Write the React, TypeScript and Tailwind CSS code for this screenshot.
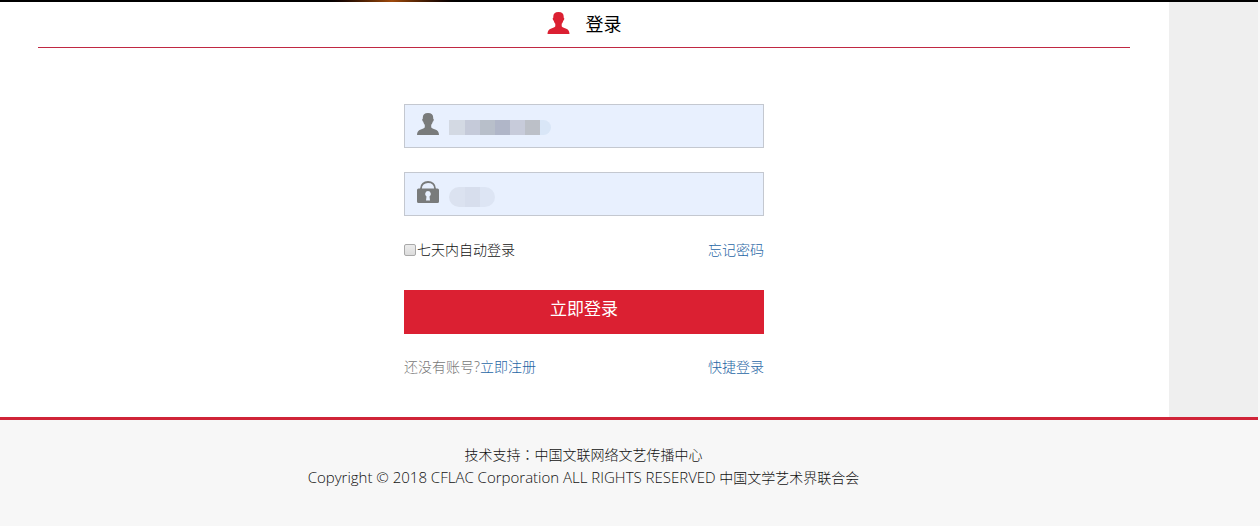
import React, { useState } from "react";

const UserIcon = ({ className }: { className: string }) => (
  <svg viewBox="0 0 22 22" className={className} fill="currentColor" aria-hidden="true">
    <path d="M11 0C7.500 0 5.700 1.900 5.800 4.800v1c-.6.1-.7.7-.5 1.500.2.8.5 1.300 1 1.400.3 1.400.8 2.300 1.500 3v2.600c-.5.900-2.200 1.500-4 2.200C1.200 17.500.1 18.800 0 22h22c-.1-3.200-1.200-4.500-3.800-5.500-1.800-.7-3.500-1.300-4-2.200v-2.600c.7-.7 1.200-1.600 1.500-3 .5-.1.8-.6 1-1.400.2-.8.1-1.400-.5-1.500v-1C16.300 1.900 14.500 0 11 0z" />
  </svg>
);

const LockIcon = ({ className }: { className: string }) => (
  <svg viewBox="0 0 22 22" className={className} aria-hidden="true">
    <path d="M4 8V7.500C4 3.500 7 1 11 1s7 2.500 7 6.500V8" fill="none" stroke="currentColor" strokeWidth="1.800" />
    <path
      fill="currentColor"
      fillRule="evenodd"
      d="M1.500 7.500h19A1.500 1.500 0 0 1 22 9v11.500a1.500 1.500 0 0 1-1.500 1.500h-19A1.500 1.500 0 0 1 0 20.500V9a1.500 1.500 0 0 1 1.500-1.500zM11 10a3 3 0 0 0-1.500 5.500L9 19.500h4l-.5-4A3 3 0 0 0 11 10z"
    />
  </svg>
);

const App = () => {
  const [account, setAccount] = useState("");
  const [password, setPassword] = useState("");
  const [remember, setRemember] = useState(false);

  return (
    <div className="min-h-screen flex flex-col bg-[#f7f7f7] pr-0.5 text-sm font-light text-[#111] font-['Noto_Sans','Noto_Sans_CJK_SC',sans-serif]">
      <div className="h-0.5 bg-black flex">
        <div className="ml-[320px] w-36 bg-linear-to-r from-black via-[#a04a0c] to-black" />
      </div>

      <div className="flex bg-[#efefef]">
        <main className="flex-1 bg-white pr-px pb-10">
          <h1 className="mx-[38px] h-[46px] pb-0.5 flex items-center justify-center gap-4 border-b border-b-[#c02842] text-lg font-normal text-black">
            <UserIcon className="w-[23px] h-[22px] mb-0.5 text-[#db2032]" />
            登录
          </h1>

          <form
            className="w-[360px] mx-auto mt-14 flex flex-col"
            onSubmit={(e) => e.preventDefault()}
          >
            <label className="relative h-11 flex items-center pl-3 border border-[#c4c8d0] bg-[#e8f0fe]">
              <UserIcon className="w-[22px] h-[22px] mb-1 text-[#797b7b]" />
              <input
                type="text"
                aria-label="账号"
                value={account}
                onChange={(e) => setAccount(e.target.value)}
                className="flex-1 h-full px-2.5 outline-none"
              />
              {/* masked account */}
              <span className="absolute left-11 top-[15px] h-[15px] flex rounded-l-sm rounded-r-full overflow-hidden pointer-events-none">
                <span className="w-4 bg-[#d3d9e3]" />
                <span className="w-[15px] bg-[#c5cad9]" />
                <span className="w-[15px] bg-[#b8bfca]" />
                <span className="w-[15px] bg-[#b0b6c8]" />
                <span className="w-[15px] bg-[#c7cbda]" />
                <span className="w-[15px] bg-[#bcc0c8]" />
                <span className="w-[11px] bg-[#d9e6f7]" />
              </span>
            </label>

            <label className="relative h-11 mt-6 flex items-center pl-3 border border-[#c4c8d0] bg-[#e8f0fe]">
              <LockIcon className="w-[22px] h-[22px] mb-1 text-[#797b7b]" />
              <input
                type="password"
                aria-label="密码"
                value={password}
                onChange={(e) => setPassword(e.target.value)}
                className="flex-1 h-full px-2.5 outline-none"
              />
              {/* masked password */}
              <span className="absolute left-11 top-3.5 h-5 flex rounded-full overflow-hidden pointer-events-none">
                <span className="w-4 bg-[#dbe2f0]" />
                <span className="w-[15px] bg-[#d7deed]" />
                <span className="w-[15px] bg-[#dde5f4]" />
              </span>
            </label>

            <div className="mt-6 flex justify-between">
              <label className="flex items-center">
                <input
                  type="checkbox"
                  checked={remember}
                  onChange={(e) => setRemember(e.target.checked)}
                  className="appearance-none size-3 mr-px rounded-xs border border-[#a9a9a9] bg-linear-to-b from-[#ececec] to-[#dcdcdc] checked:from-[#337ab7] checked:to-[#337ab7]"
                />
                七天内自动登录
              </label>
              <a href="#" className="text-[#1f66a5]">
                忘记密码
              </a>
            </div>

            <button
              type="submit"
              className="h-11 mt-[30px] pb-1.5 bg-[#db2032] text-white text-[17px] font-normal"
            >
              立即登录
            </button>

            <div className="mt-[23px] flex justify-between text-[#777]">
              <span>
                还没有账号?
                <a href="#" className="text-[#1f66a5]">
                  立即注册
                </a>
              </span>
              <a href="#" className="text-[#1f66a5]">
                快捷登录
              </a>
            </div>
          </form>
        </main>
        <aside className="w-[89px]" />
      </div>

      <footer className="flex-1 border-t-3 border-[#d02438] pt-[23px] pr-[91px] text-center leading-[23px]">
        <p>
          技术支持<span className="font-['Noto_Sans_CJK_TC',sans-serif]" lang="zh-Hant">：</span>中国文联网络文艺传播中心
        </p>
        <p>
          <span className="text-[15px] font-['Open_Sans',sans-serif]">
            Copyright © 2018 CFLAC Corporation ALL RIGHTS RESERVED
          </span>{" "}
          中国文学艺术界联合会
        </p>
      </footer>
    </div>
  );
};

export default App;
